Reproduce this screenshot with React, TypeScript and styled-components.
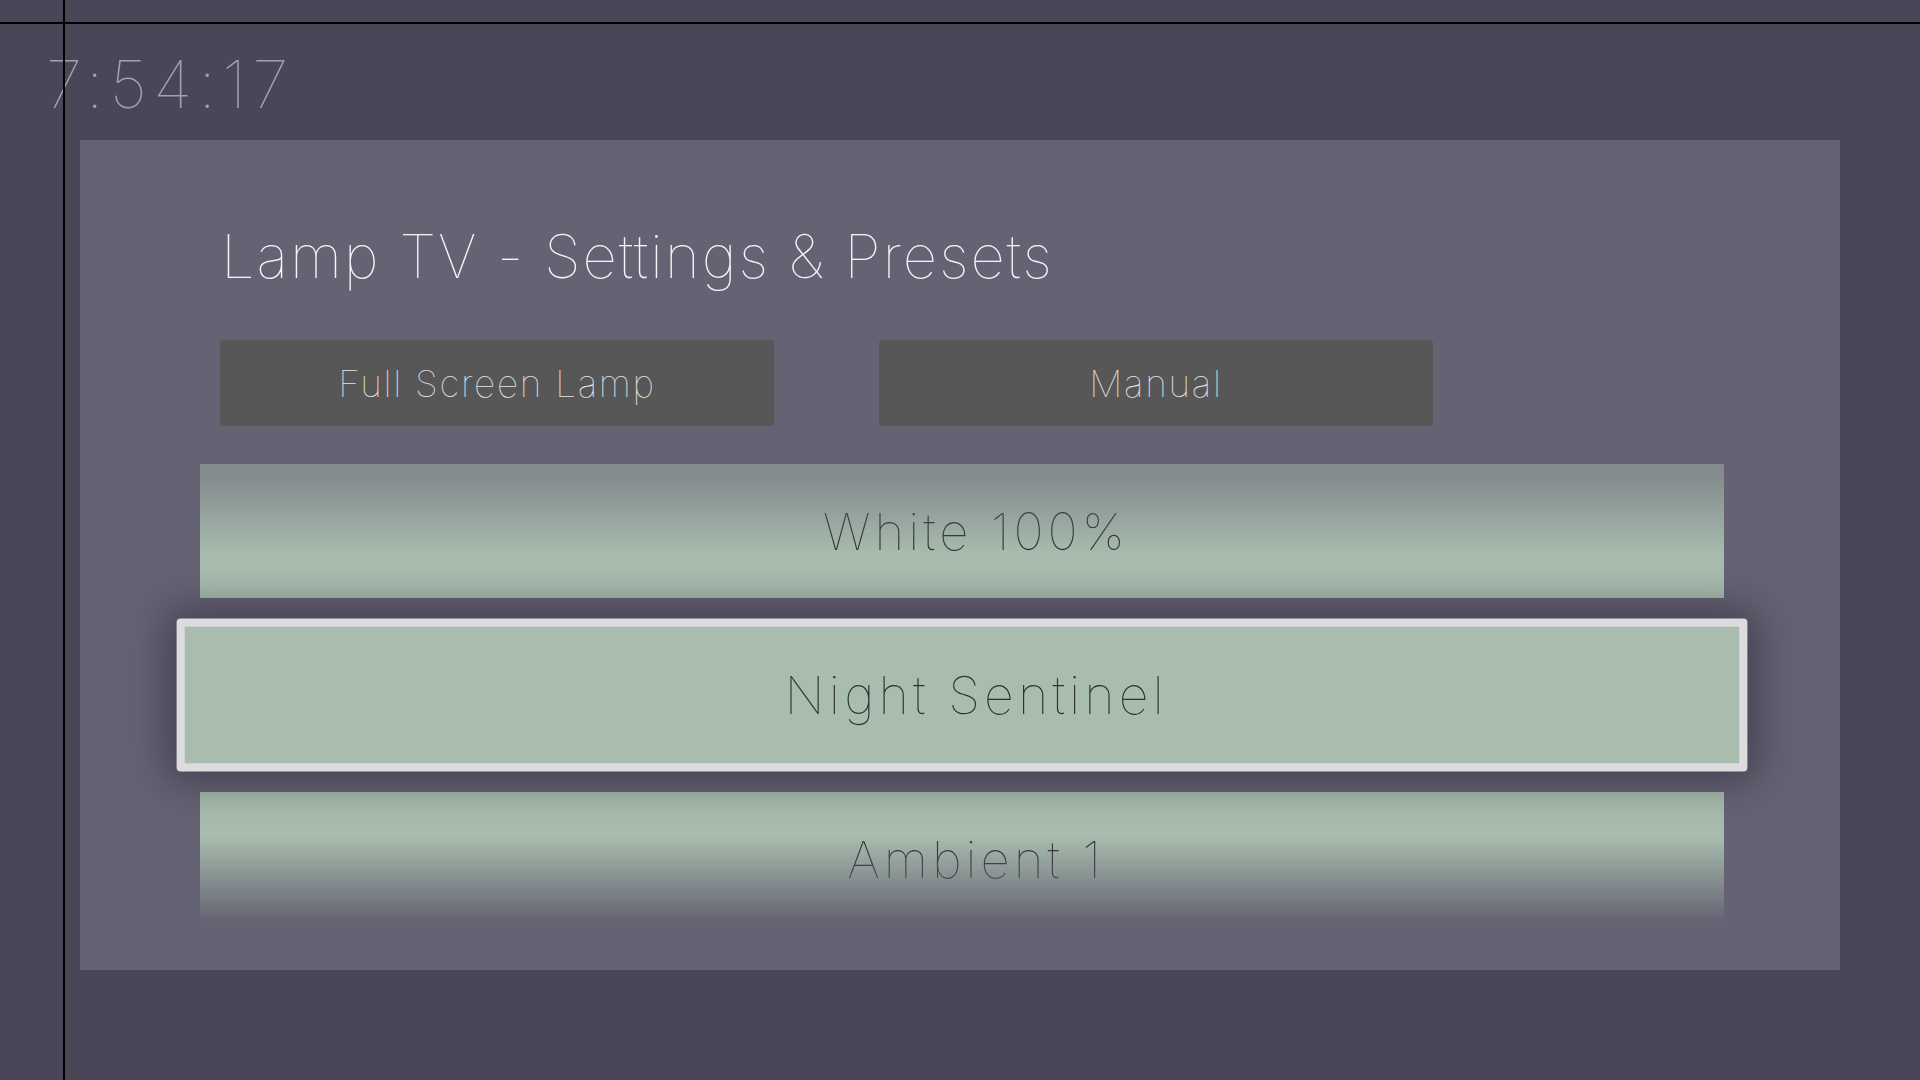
import React from "react";
import styled, { createGlobalStyle } from "styled-components";

const Global = createGlobalStyle`
  html, body {
    margin: 0;
    padding: 0;
    background: #4a4658;
  }
  body {
    font-family: "Inter", "Lato", "Liberation Sans", sans-serif;
  }
`;

const Screen = styled.div`
  position: relative;
  width: 1920px;
  height: 1080px;
  overflow: hidden;
  background: #4a4658;
  display: flex;
  flex-direction: column;
`;

const GuideV = styled.div`
  position: absolute;
  top: 0;
  bottom: 0;
  left: 63px;
  width: 2px;
  background: #000;
  z-index: 5;
`;

const GuideH = styled.div`
  position: absolute;
  left: 0;
  right: 0;
  top: 22px;
  height: 2px;
  background: #000;
  z-index: 5;
`;

const ClockRow = styled.div`
  box-sizing: border-box;
  height: 140px;
  padding: 51px 0 0 46px;
`;

const Clock = styled.div`
  font-size: 66px;
  line-height: 1;
  font-weight: 100;
  color: #a3a1ab;
  letter-spacing: 6px;
`;

const Panel = styled.div`
  box-sizing: border-box;
  margin-left: 80px;
  width: 1760px;
  height: 830px;
  background: #656373;
  display: flex;
  flex-direction: column;
  padding-top: 86px;
`;

const Title = styled.h1`
  margin: 0 0 54px 141px;
  font-size: 60px;
  line-height: 1;
  font-weight: 100;
  color: #f4f4f7;
  letter-spacing: 1.85px;
`;

const ButtonRow = styled.div`
  display: flex;
  gap: 105px;
  padding-left: 140px;
  margin-bottom: 38px;
`;

const ActionButton = styled.div`
  width: 554px;
  height: 86px;
  border-radius: 4px;
  background: #575757;
  color: #e4e4e4;
  display: flex;
  align-items: center;
  justify-content: center;
  font-size: 37px;
  line-height: 1;
  font-weight: 100;
  letter-spacing: 1.7px;
`;

const List = styled.div`
  height: 462px;
  overflow: hidden;
  display: flex;
  flex-direction: column;
  gap: 22px;
  padding-left: 120px;
  -webkit-mask-image: linear-gradient(
    to bottom,
    rgba(0, 0, 0, 0.45) 0px,
    rgba(0, 0, 0, 0.45) 12px,
    #000 92px,
    #000 calc(100% - 90px),
    rgba(0, 0, 0, 0) calc(100% - 4px)
  );
  mask-image: linear-gradient(
    to bottom,
    rgba(0, 0, 0, 0.45) 0px,
    rgba(0, 0, 0, 0.45) 12px,
    #000 92px,
    #000 calc(100% - 90px),
    rgba(0, 0, 0, 0) calc(100% - 4px)
  );
`;

const PresetRow = styled.div<{ $focused?: boolean }>`
  flex: none;
  box-sizing: border-box;
  width: 1524px;
  height: 134px;
  padding-left: 28px;
  background: #a8bdae;
  color: #303035;
  display: flex;
  align-items: center;
  justify-content: center;
  font-size: 51px;
  line-height: 1;
  font-weight: 100;
  letter-spacing: 4px;
  position: relative;
  ${(p) =>
    p.$focused
      ? `
    width: 1540px;
    height: 150px;
    margin-left: -8px;
    border: 8px solid #dcdcde;
    border-radius: 4px;
    transform: scale(1.02);
    z-index: 1;
    box-shadow: 0 0 40px 10px rgba(40, 37, 52, 0.55);
  `
      : ``}
`;

const presets = ["White 100%", "Night Sentinel", "Ambient 1"];

export default function App() {
  return (
    <Screen>
      <Global />
      <GuideV />
      <GuideH />
      <ClockRow>
        <Clock>7:54:17</Clock>
      </ClockRow>
      <Panel>
        <Title>Lamp TV - Settings &amp; Presets</Title>
        <ButtonRow>
          <ActionButton>Full Screen Lamp</ActionButton>
          <ActionButton>Manual</ActionButton>
        </ButtonRow>
        <List>
          {presets.map((name, i) => (
            <PresetRow key={name} $focused={i === 1}>
              {name}
            </PresetRow>
          ))}
        </List>
      </Panel>
    </Screen>
  );
}
